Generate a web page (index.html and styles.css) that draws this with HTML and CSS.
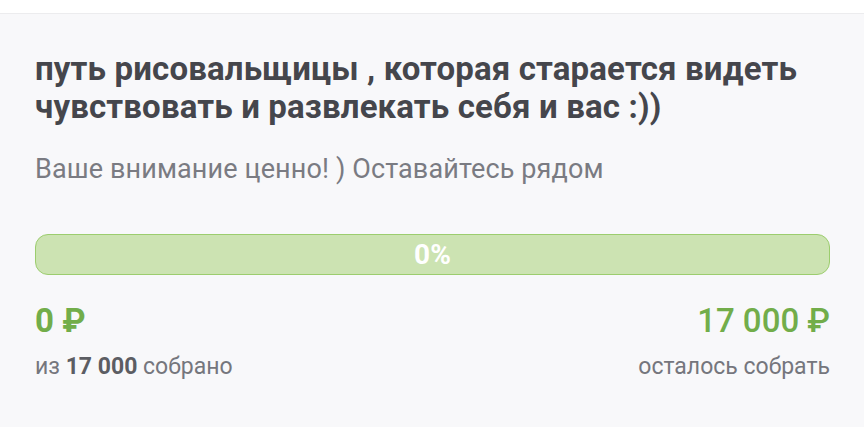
FILE: index.html
```html
<!DOCTYPE html>
<html lang="ru">
<head>
<meta charset="utf-8">
<link rel="stylesheet" href="styles.css">
</head>
<body>
<div class="topbar"></div>
<main class="card">
  <h1 class="title">путь рисовальщицы , которая старается видеть чувствовать и развлекать себя и вас :))</h1>
  <p class="subtitle">Ваше внимание ценно! ) Оставайтесь рядом</p>
  <div class="progress"><span class="progress-label">0%</span></div>
  <div class="stats">
    <div class="stat">
      <div class="amount amount-raised">0 ₽</div>
      <div class="caption">из <b>17 000</b> собрано</div>
    </div>
    <div class="stat stat-right">
      <div class="amount amount-left">17 000 ₽</div>
      <div class="caption">осталось собрать</div>
    </div>
  </div>
</main>
</body>
</html>
```
FILE: styles.css
```css
html, body {
  margin: 0;
  padding: 0;
  background: #f8f8fa;
  font-family: Roboto, "Noto Sans", sans-serif;
}
.topbar {
  height: 13px;
  background: #ffffff;
  border-bottom: 1px solid #ececee;
}
.card {
  padding: 36px 34px 40px 35px;
}
.title {
  margin: 0;
  font-size: 33px;
  line-height: 38px;
  font-weight: 700;
  letter-spacing: 0.15px;
  color: #45464c;
}
.subtitle {
  margin: 27px 0 0;
  font-size: 27px;
  line-height: 32px;
  letter-spacing: 0.12px;
  color: #7a7b82;
}
.progress {
  margin-top: 49px;
  height: 41px;
  box-sizing: border-box;
  border: 1px solid #9ccd6e;
  background: #cce3b2;
  border-radius: 13px;
  display: flex;
  align-items: center;
  justify-content: center;
}
.progress-label {
  color: #ffffff;
  font-weight: 700;
  font-size: 28px;
}
.stats {
  margin-top: 27px;
  display: flex;
  justify-content: space-between;
}
.stat-right {
  text-align: right;
}
.amount {
  font-size: 33px;
  line-height: 38px;
  color: #72ad4a;
}
.amount-raised {
  font-weight: 700;
}
.amount-left {
  font-weight: 500;
}
.caption {
  margin-top: 13px;
  font-size: 23px;
  line-height: 28px;
  color: #75767d;
}
.caption b {
  color: #5c5d63;
  font-weight: 700;
}
```
